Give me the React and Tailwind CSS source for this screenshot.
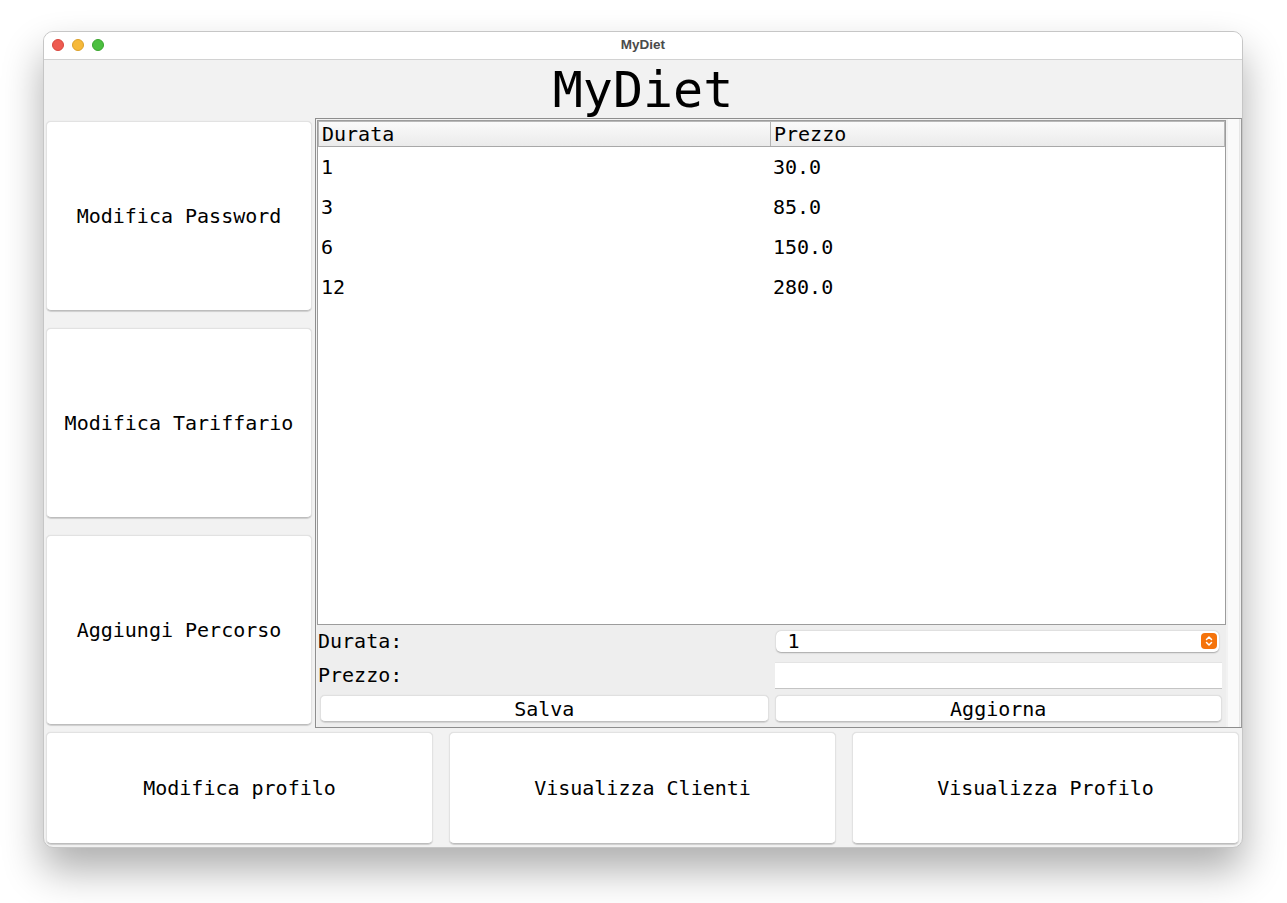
import { useState } from "react";

const mono = { fontFamily: '"DejaVu Sans Mono", "Liberation Mono", monospace' };

const tariffe = [
  { durata: "1", prezzo: "30.0" },
  { durata: "3", prezzo: "85.0" },
  { durata: "6", prezzo: "150.0" },
  { durata: "12", prezzo: "280.0" },
];

function BigButton({ label, className = "" }) {
  return (
    <button
      className={`flex items-center justify-center bg-white rounded-[5px] border border-[#e2e2e2] border-b-[#bdbdbd] shadow-[0_0.5px_1px_rgba(0,0,0,0.15)] text-[20px] text-black ${className}`}
    >
      {label}
    </button>
  );
}

function SmallButton({ label }) {
  return (
    <button className="h-[27px] w-full flex items-center justify-center bg-white rounded-[5px] border border-[#e0e0e0] border-b-[#c0c0c0] shadow-[0_0.5px_1px_rgba(0,0,0,0.12)] text-[20px] text-black leading-none">
      {label}
    </button>
  );
}

export default function App() {
  const [durata, setDurata] = useState("1");
  const [prezzo, setPrezzo] = useState("");

  return (
    <div className="min-h-screen bg-white pt-[31px] pl-[43px]" style={mono}>
      <div className="w-[1200px] h-[817px] rounded-[10px] overflow-hidden border border-[#c6c6c6] shadow-[0_22px_40px_rgba(0,0,0,0.32)] flex flex-col bg-[#f2f2f2]">
        {/* title bar */}
        <div className="h-[28px] shrink-0 bg-white border-b border-[#d2d2d2] relative flex items-center justify-center">
          <div className="absolute left-[8px] top-[7px] flex gap-[8px]">
            <span className="w-[12px] h-[12px] rounded-full bg-[#ee5b51] border border-[#d8473e]" />
            <span className="w-[12px] h-[12px] rounded-full bg-[#f6b93a] border border-[#dba02a]" />
            <span className="w-[12px] h-[12px] rounded-full bg-[#4cbf40] border border-[#3aa52f]" />
          </div>
          <span
            className="text-[13.5px] font-bold text-[#4b4b4b]"
            style={{ fontFamily: '"Liberation Sans", Arial, sans-serif' }}
          >
            MyDiet
          </span>
        </div>

        {/* header */}
        <div className="h-[58px] shrink-0 flex items-center justify-center">
          <h1 className="text-[50px] leading-none text-black mt-[1px]">MyDiet</h1>
        </div>

        {/* middle */}
        <div className="h-[610px] shrink-0 flex">
          <div className="w-[271px] shrink-0 flex flex-col gap-[17px] pt-[3px] pb-[2px] pl-[2px] pr-[3px]">
            <BigButton label="Modifica Password" className="h-[190px]" />
            <BigButton label="Modifica Tariffario" className="h-[190px]" />
            <BigButton label="Aggiungi Percorso" className="h-[190px]" />
          </div>

          <div className="flex-1 flex border border-[#8e8e8e] border-r-[#9a9a9a] bg-[#f2f2f2]">
            <div className="w-[910px] flex flex-col pl-px pt-px">
              {/* table */}
              <div className="h-[505px] border border-[#9c9c9c] bg-white flex flex-col">
                <div className="h-[26px] flex border border-[#b8b8b8] border-b-[#a8a8a8] bg-gradient-to-b from-[#fafafa] to-[#ebebeb] text-[20px] leading-none">
                  <div className="w-[452px] border-r border-[#b4b4b4] pl-[3px] flex items-center">Durata</div>
                  <div className="flex-1 pl-[3px] flex items-center">Prezzo</div>
                </div>
                {tariffe.map((t) => (
                  <div key={t.durata} className="h-[40px] flex items-center text-[20px] leading-none">
                    <div className="w-[454px] pl-[3px]">{t.durata}</div>
                    <div className="flex-1 pl-[1px]">{t.prezzo}</div>
                  </div>
                ))}
              </div>

              {/* form */}
              <div className="flex-1 bg-[#eeeeee] grid grid-cols-2 grid-rows-[32px_36px_34px] text-[20px] leading-none">
                <div className="flex items-center pl-px">Durata:</div>
                <div className="flex items-center pl-[4px] pr-[7px]">
                  <div className="relative w-full h-[21px] bg-white rounded-[5px] shadow-[0_0.5px_1.5px_rgba(0,0,0,0.3)] flex items-center">
                    <select
                      value={durata}
                      onChange={(e) => setDurata(e.target.value)}
                      className="appearance-none w-full h-full bg-transparent pl-[12px] outline-none text-[20px] leading-none"
                      style={mono}
                    >
                      {tariffe.map((t) => (
                        <option key={t.durata} value={t.durata}>
                          {t.durata}
                        </option>
                      ))}
                    </select>
                    <span className="absolute right-[2px] top-[2px] w-[16px] h-[16px] rounded-[4px] bg-[#f5730b] flex items-center justify-center pointer-events-none">
                      <svg width="8" height="12" viewBox="0 0 8 12" fill="none" stroke="white" strokeWidth="1.5" strokeLinecap="round" strokeLinejoin="round">
                        <path d="M1.5 4.5 4 2 6.5 4.5" />
                        <path d="M1.5 7.5 4 10 6.5 7.5" />
                      </svg>
                    </span>
                  </div>
                </div>
                <div className="flex items-center pl-px">Prezzo:</div>
                <div className="flex items-center pl-[3px] pr-[4px]">
                  <input
                    value={prezzo}
                    onChange={(e) => setPrezzo(e.target.value)}
                    className="w-full h-[27px] bg-white border-t border-[#e4e4e4] border-b border-b-[#c4c4c4] outline-none px-[3px] text-[20px]"
                    style={mono}
                  />
                </div>
                <div className="flex items-start pt-[2px] pl-[3px] pr-[3px]">
                  <SmallButton label="Salva" />
                </div>
                <div className="flex items-start pt-[2px] pl-[3px] pr-[4px]">
                  <SmallButton label="Aggiorna" />
                </div>
              </div>
            </div>
            {/* right strip */}
            <div className="flex-1 flex pl-[2px] pr-px">
              <div className="flex-1 bg-[#fafafa] border-r border-[#e6e6e6]" />
            </div>
          </div>
        </div>

        {/* bottom */}
        <div className="flex-1 flex gap-[16px] pt-[4px] pb-[3px] pl-[2px] pr-[3px]">
          <BigButton label="Modifica profilo" className="flex-1" />
          <BigButton label="Visualizza Clienti" className="flex-1" />
          <BigButton label="Visualizza Profilo" className="flex-1" />
        </div>
      </div>
    </div>
  );
}
